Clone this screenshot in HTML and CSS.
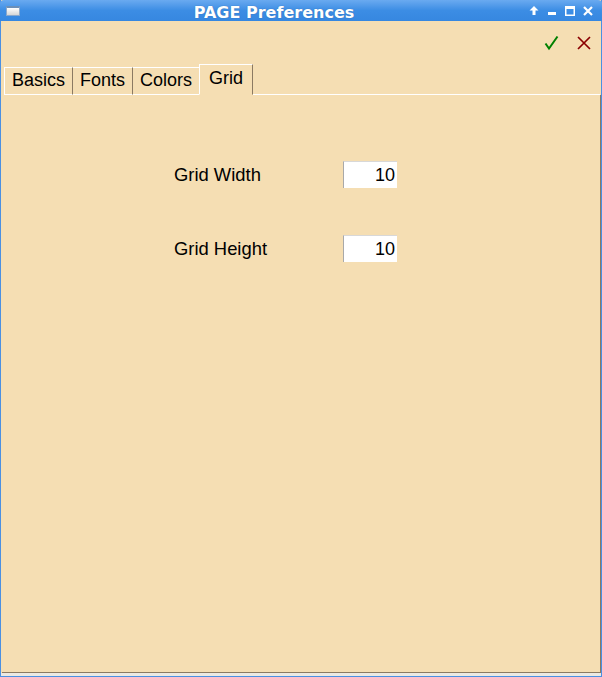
FILE: index.html
```html
<!DOCTYPE html>
<html>
<head>
<meta charset="utf-8">
<link rel="stylesheet" href="styles.css">
</head>
<body>
<div class="window">
  <div class="titlebar">
    <div class="winicon"></div>
    <div class="title">PAGE Preferences</div>
    <div class="wbtns">
      <svg class="wb" width="12" height="12" viewBox="0 0 12 12"><path d="M6 1 L10.5 5.5 L7.5 5.5 L7.5 10 L4.5 10 L4.5 5.5 L1.5 5.5 Z" fill="#fff"/></svg>
      <svg class="wb" width="12" height="12" viewBox="0 0 12 12"><rect x="2" y="7" width="8" height="3" fill="#fff"/></svg>
      <svg class="wb" width="12" height="12" viewBox="0 0 12 12"><rect x="1.75" y="1.75" width="8.5" height="8.5" fill="none" stroke="#fff" stroke-width="1.5"/><rect x="1" y="1" width="10" height="3" fill="#fff"/></svg>
      <svg class="wb" width="12" height="12" viewBox="0 0 12 12"><path d="M2 2 L10 10 M10 2 L2 10" stroke="#fff" stroke-width="2.2"/></svg>
    </div>
  </div>
  <div class="toolbar">
    <svg class="ok" width="16" height="16" viewBox="0 0 16 16"><path d="M1.5 8.5 L5 13.5 L13.5 1.5" fill="none" stroke="#008000" stroke-width="2"/></svg>
    <svg class="cancel" width="16" height="16" viewBox="0 0 16 16"><path d="M2 2 L14 14 M14 2 L2 14" fill="none" stroke="#8b0000" stroke-width="1.7"/></svg>
  </div>
  <div class="tabs">
    <div class="tab">Basics</div>
    <div class="tab">Fonts</div>
    <div class="tab">Colors</div>
    <div class="tab active">Grid</div>
    <div class="tabfill"></div>
  </div>
  <div class="panel">
    <div class="form">
      <div class="label">Grid Width</div>
      <div class="entry">10</div>
      <div class="label">Grid Height</div>
      <div class="entry">10</div>
    </div>
  </div>
  <div class="bottom"></div>
</div>
</body>
</html>
```
FILE: styles.css
```css
html, body {
  margin: 0;
  padding: 0;
  background: #f5deb3;
}
.window {
  width: 602px;
  height: 677px;
  box-sizing: border-box;
  display: flex;
  flex-direction: column;
  background: #f5deb3;
  border-left: 1px solid #4a90e2;
  border-right: 1px solid #4a90e2;
  border-bottom: 1px solid #4a90e2;
  font-family: "Liberation Sans", Arial, sans-serif;
  color: #000;
}
.titlebar {
  height: 21px;
  margin: 0 -1px;
  display: flex;
  align-items: center;
  position: relative;
  background: linear-gradient(#6aaaf0, #3c8de4 50%, #3687e0);
  border-radius: 4px 4px 0 0;
}
.winicon {
  width: 14px;
  height: 10px;
  margin-left: 6px;
  background: linear-gradient(#ffffff, #d6d6d6);
  border: 1px solid #8aa8cc;
  border-top: 2px solid #6b8fb8;
  box-sizing: border-box;
}
.title {
  flex: 1;
  text-align: center;
  font-family: "DejaVu Sans", sans-serif;
  font-weight: bold;
  font-size: 16px;
  color: #fff;
  padding-top: 3px;
  text-shadow: 0 0 1px #2a60a0;
}
.wbtns {
  display: flex;
  gap: 6px;
  margin-right: 8px;
}
.toolbar {
  height: 43px;
  display: flex;
  justify-content: flex-end;
  align-items: flex-start;
  gap: 16px;
  padding: 14px 9px 0 0;
  box-sizing: border-box;
}
.tabs {
  display: flex;
  align-items: flex-end;
  height: 31px;
  padding-left: 3px;
}
.tab {
  font-size: 18px;
  height: 28px;
  box-sizing: border-box;
  padding: 1px 7px 0 7px;
  border-top: 1px solid #fff;
  border-left: 1px solid #fff;
  border-right: 1px solid #8b7a62;
  border-bottom: 1px solid #fff;
  line-height: 22px;
}
.tab + .tab {
  border-left: none;
}
.tab.active {
  height: 31px;
  border-left: 1px solid #fff;
  border-bottom: 1px solid #f5deb3;
  padding: 2px 9px 0 9px;
  margin-left: -1px;
}
.tabfill {
  flex: 1;
  border-bottom: 1px solid #fff;
  margin-right: 1px;
}
.panel {
  flex: 1;
  border-right: 1px solid #8b7a62;
  border-bottom: 1px solid #8b7a62;
  margin-left: 1px;
}
.form {
  display: grid;
  grid-template-columns: 169px 54px;
  row-gap: 47px;
  padding: 66px 0 0 172px;
  align-items: center;
}
.label {
  font-size: 18.4px;
}
.entry {
  height: 27px;
  box-sizing: border-box;
  background: #fff;
  border-left: 1px solid #a9a9a9;
  border-top: 1px solid #d8d8d8;
  text-align: right;
  font-size: 18px;
  line-height: 26px;
  padding-right: 2px;
}
.bottom {
  height: 3px;
  background: #ece9e2;
}
```
